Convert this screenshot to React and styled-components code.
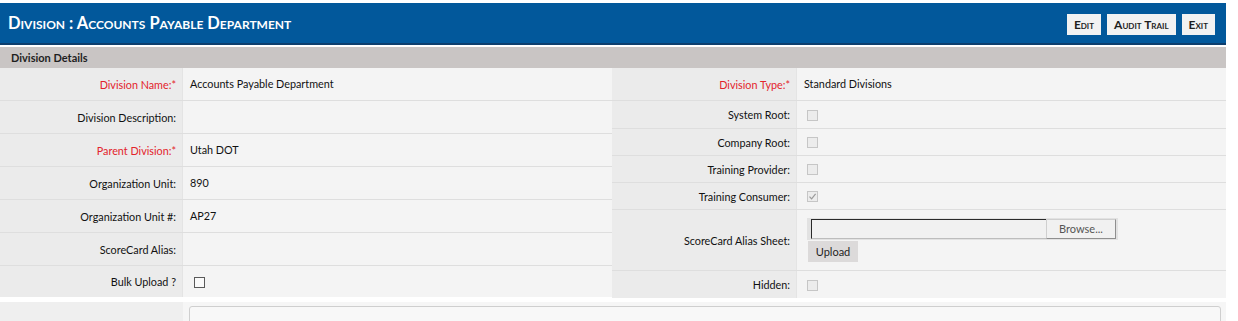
import styled, { createGlobalStyle } from 'styled-components';

const GlobalStyle = createGlobalStyle`
  html, body {
    margin: 0;
    padding: 0;
    background: #ffffff;
    font-family: Lato, "Open Sans", Arial, sans-serif;
  }
`;

const leftFields = [
  { label: 'Division Name:', required: true, value: 'Accounts Payable Department' },
  { label: 'Division Description:', value: '' },
  { label: 'Parent Division:', required: true, value: 'Utah DOT' },
  { label: 'Organization Unit:', value: '890' },
  { label: 'Organization Unit #:', value: 'AP27' },
  { label: 'ScoreCard Alias:', value: '' },
  { label: 'Bulk Upload ?', check: 'enabled', height: 31 },
];

const rightFields = [
  { label: 'Division Type:', required: true, value: 'Standard Divisions' },
  { label: 'System Root:', check: 'disabled', height: 28 },
  { label: 'Company Root:', check: 'disabled', height: 27 },
  { label: 'Training Provider:', check: 'disabled', height: 27 },
  { label: 'Training Consumer:', check: 'checked', height: 27 },
  { label: 'ScoreCard Alias Sheet:', file: true, height: 61 },
  { label: 'Hidden:', check: 'disabled', height: 27 },
];

function CheckBox({ kind }) {
  return (
    <Box $kind={kind}>
      {kind === 'checked' && (
        <svg width="9" height="9" viewBox="0 0 9 9">
          <path d="M1.5 4.6 L3.6 6.8 L7.6 1.8" fill="none" stroke="#9a9a9a" strokeWidth="1.2" />
        </svg>
      )}
    </Box>
  );
}

function FieldTable({ fields, labelWidth }) {
  return (
    <Table>
      {fields.map((f) => (
        <Row key={f.label} $labelWidth={labelWidth} $height={f.height || 33}>
          <Label $required={f.required}>
            {f.label}
            {f.required && '*'}
          </Label>
          <Value $top={f.file}>
            {f.check && <CheckBox kind={f.check} />}
            {f.value}
            {f.file && (
              <FileBlock>
                <FileFrame>
                  <FileText />
                  <BrowseButton>Browse...</BrowseButton>
                </FileFrame>
                <UploadButton>Upload</UploadButton>
              </FileBlock>
            )}
          </Value>
        </Row>
      ))}
    </Table>
  );
}

export default function App() {
  return (
    <Page>
      <GlobalStyle />
      <Header>
        <Title>Division : Accounts Payable Department</Title>
        <Actions>
          <ActionButton>Edit</ActionButton>
          <ActionButton>Audit Trail</ActionButton>
          <ActionButton>Exit</ActionButton>
        </Actions>
      </Header>
      <SectionBar>Division Details</SectionBar>
      <Columns>
        <FieldTable fields={leftFields} labelWidth={183} />
        <FieldTable fields={rightFields} labelWidth={185} />
      </Columns>
      <NotesRow>
        <NotesLabel />
        <NotesValue>
          <NotesArea />
        </NotesValue>
      </NotesRow>
    </Page>
  );
}

const Page = styled.div`
  width: 1226px;
  padding-top: 3px;
`;

const Header = styled.div`
  height: 40px;
  background-color: #02589b;
  border-bottom: 2px solid #0d3e6d;
  display: flex;
  align-items: center;
  justify-content: space-between;
  padding: 0 11px 0 8px;
`;

const Title = styled.h1`
  margin: 0;
  color: #ffffff;
  font-size: 16.5px;
  font-weight: 700;
  font-variant: small-caps;
`;

const Actions = styled.div`
  display: flex;
  gap: 6px;
  padding-top: 2px;
`;

const ActionButton = styled.button`
  height: 21px;
  padding: 0 7px;
  border: none;
  background: #f2f2f2;
  color: #1e1e1e;
  font-family: Lato, sans-serif;
  font-size: 12px;
  font-weight: 700;
  font-variant: small-caps;
`;

const SectionBar = styled.div`
  margin-top: 2px;
  height: 21px;
  background: #c9c5c4;
  color: #1f1f1f;
  font-size: 11px;
  font-weight: 700;
  display: flex;
  align-items: center;
  padding-left: 11px;
`;

const Columns = styled.div`
  display: grid;
  grid-template-columns: 612px 614px;
`;

const Table = styled.div`
  display: flex;
  flex-direction: column;
`;

const Row = styled.div`
  display: grid;
  grid-template-columns: ${(p) => p.$labelWidth}px 1fr;
  height: ${(p) => p.$height}px;
  box-sizing: border-box;
  border-bottom: 1px solid #dedede;
  &:last-child {
    border-bottom: none;
  }
`;

const Label = styled.div`
  background: #ebebeb;
  color: ${(p) => (p.$required ? '#e3242b' : '#111111')};
  font-size: 10.8px;
  display: flex;
  align-items: center;
  justify-content: flex-end;
  padding-right: 6px;
  border-right: 1px solid #e4e4e4;
`;

const Value = styled.div`
  background: #f4f4f4;
  color: #111111;
  font-size: 10.8px;
  display: flex;
  align-items: ${(p) => (p.$top ? 'flex-start' : 'center')};
  padding-left: 7px;
  padding-top: ${(p) => (p.$top ? '8px' : '0')};
  padding-bottom: 2px;
  box-sizing: border-box;
`;

const Box = styled.span`
  width: 9px;
  height: 9px;
  margin-left: ${(p) => (p.$kind === 'enabled' ? '4px' : '3px')};
  border: 1px solid ${(p) => (p.$kind === 'enabled' ? '#5a5a5a' : '#c6c6c6')};
  background: ${(p) => (p.$kind === 'enabled' ? '#fafafa' : '#ececec')};
  display: inline-flex;
  align-items: center;
  justify-content: center;
  margin-top: 3px;
`;

const FileBlock = styled.div`
  display: flex;
  flex-direction: column;
  gap: 1px;
  margin-left: 3px;
`;

const FileFrame = styled.div`
  display: flex;
  width: 311px;
  height: 22px;
  background: #e2e2e2;
  padding: 1px 2px 1px 4px;
  box-sizing: border-box;
`;

const FileText = styled.div`
  width: 234px;
  border: 1px solid #2a2a2a;
  border-right: none;
  background: #f1f1f1;
  border-bottom-color: #bdbdbd;
`;

const BrowseButton = styled.div`
  flex: 1;
  border: 1px solid #8f8f8f;
  border-left-color: #cfcfcf;
  border-top-color: #cfcfcf;
  background: #f1f1f1;
  color: #555;
  font-size: 11px;
  display: flex;
  align-items: center;
  justify-content: center;
  padding-bottom: 2px;
`;

const UploadButton = styled.div`
  width: 50px;
  height: 21px;
  background: #dcdada;
  color: #1f1f1f;
  font-size: 11px;
  display: flex;
  align-items: center;
  justify-content: center;
  margin-left: 1px;
`;

const NotesRow = styled.div`
  display: grid;
  grid-template-columns: 183px 1fr;
  margin-top: 4px;
  height: 20px;
  overflow: hidden;
`;

const NotesLabel = styled.div`
  background: #efefef;
`;

const NotesValue = styled.div`
  background: #f6f6f6;
  padding: 4px 5px 0 6px;
`;

const NotesArea = styled.div`
  height: 40px;
  border: 1px solid #cfcfcf;
  border-radius: 3px;
  background: #f8f8f8;
`;
